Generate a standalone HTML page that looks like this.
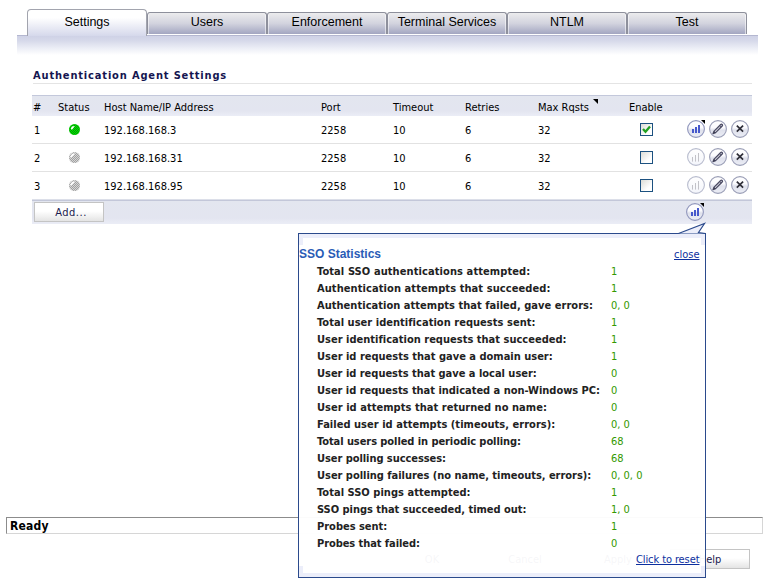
<!DOCTYPE html>
<html><head><meta charset="utf-8"><title>SSO Authentication Configuration</title>
<style>
html,body{margin:0;padding:0;background:#fff;}
body{width:763px;height:582px;position:relative;overflow:hidden;font-family:"DejaVu Sans Condensed","DejaVu Sans","Liberation Sans",sans-serif;font-size:11px;color:#000;}
.tab{position:absolute;top:12px;height:21px;width:118px;border:1px solid #8e909c;border-bottom:none;border-radius:3px 3px 0 0;box-shadow:inset 1px 0 0 rgba(255,255,255,.55),inset -1px 0 0 rgba(255,255,255,.55);background:linear-gradient(#ececee,#d2d3de 50%,#a3a6c1);font-family:"Liberation Sans",sans-serif;font-size:12.5px;text-align:center;line-height:18px;}
.tab.active{top:9px;height:26px;width:118px;border-radius:4px 4px 0 0;box-shadow:none;background:linear-gradient(#fff 30%,#d5d8eb);border-color:#a2a4ae;line-height:24px;z-index:2}
.bar{position:absolute;left:17px;top:35px;width:741px;height:20px;background:linear-gradient(#cfd2e6,#d6d9ea 25%,#eceef6 65%,#fff);border-top:1px solid #b4b7d0;box-sizing:border-box}
h1{position:absolute;left:33px;top:69px;margin:0;font-weight:bold;font-size:11px;line-height:13px;letter-spacing:0.84px;color:#151550;white-space:nowrap}
.hline{position:absolute;left:33px;top:83px;width:719px;height:1px;background:#e4e4e4}
.thead{position:absolute;left:32px;top:95px;width:720px;height:21px;background:linear-gradient(#e3e6ef,#e3e5f0 75%,#ebedf6);border-top:1px solid #c3c8db;box-sizing:border-box}
.tfoot{position:absolute;left:32px;top:199px;width:720px;height:25px;background:linear-gradient(#e3e6ef,#e3e5f0 75%,#ebedf6);border-top:1px solid #dcdfe9;box-shadow:inset 0 1px 0 #c3c7d9;box-sizing:border-box}
.sep{position:absolute;left:32px;width:720px;height:1px;background:#e2e2e2}
.c{position:absolute;white-space:nowrap;line-height:13px}
.dot{position:absolute;left:69px;width:11px;height:11px}
.cb{position:absolute;left:640px;width:11px;height:11px;border:1px solid #1c5180;background:linear-gradient(135deg,#dcdcd6,#fff 70%)}
.btn{position:absolute;box-sizing:border-box;height:20px;border:1px solid #c4c4c4;background:linear-gradient(#fff 45%,#e4e4e4);color:#1a1a4e;text-align:center;line-height:19px}
.btn.hid{border-color:transparent;background:none}
.ico{position:absolute;width:18px;height:18px}
.status{position:absolute;left:6px;top:517px;width:757px;height:17px;box-sizing:border-box;border:1px solid #d6d6d6;border-top-color:#8c8c8c;border-left-color:#8c8c8c;font-weight:bold;font-size:12px;line-height:16px;padding-left:3px;letter-spacing:0.2px}
.pop{position:absolute;left:298px;top:233px;width:408px;height:345px;box-sizing:border-box;border:1px solid #2b4a8c;background:rgba(255,255,255,0.96)}
.pop .l{position:absolute;left:18px;font-weight:bold;white-space:nowrap;line-height:17px;color:#222}
.pop .v{position:absolute;left:312px;white-space:nowrap;line-height:17px;color:#339900}

.bt{position:absolute;left:0;width:406px;height:4px;background:#eceefa}
.bv{position:absolute;width:4px;height:11px;background:#eceefa}
a{color:#0c2f9e;text-decoration:underline}
</style></head><body>
<div class="bar"></div>
<div class="tab active" style="left:27px">Settings</div>
<div class="tab" style="left:147px">Users</div>
<div class="tab" style="left:267px">Enforcement</div>
<div class="tab" style="left:387px">Terminal Services</div>
<div class="tab" style="left:507px">NTLM</div>
<div class="tab" style="left:627px">Test</div>
<h1>Authentication Agent Settings</h1>
<div class="hline"></div>
<div class="thead"></div>
<div class="c" style="left:33px;top:101px">#</div>
<div class="c" style="left:58px;top:101px">Status</div>
<div class="c" style="left:104px;top:101px">Host Name/IP Address</div>
<div class="c" style="left:321px;top:101px">Port</div>
<div class="c" style="left:393px;top:101px">Timeout</div>
<div class="c" style="left:465px;top:101px">Retries</div>
<div class="c" style="left:538px;top:101px">Max Rqsts</div>
<div class="c" style="left:629px;top:101px">Enable</div>
<svg style="position:absolute;left:593px;top:99px" width="5" height="5"><path d="M0 0H5V5Z" fill="#000"/></svg>
<div class="sep" style="top:143px"></div>
<div class="sep" style="top:171px"></div>
<div class="tfoot"></div>
<div class="c" style="left:34px;top:124px">1</div>
<svg class="dot" style="top:124px" viewBox="0 0 11 11"><defs><pattern id="pg124" width="2" height="2" patternUnits="userSpaceOnUse"><rect width="2" height="2" fill="#00e400"/><rect width="1" height="1" fill="#009a00"/><rect x="1" y="1" width="1" height="1" fill="#009a00"/></pattern></defs><circle cx="5.5" cy="5.5" r="5.5" fill="url(#pg124)"/><path d="M2 4.3L2.9 2.4L5.9 2L2.8 5.9Z" fill="#fff"/></svg>
<div class="c" style="left:104px;top:124px">192.168.168.3</div>
<div class="c" style="left:321px;top:124px">2258</div>
<div class="c" style="left:393px;top:124px">10</div>
<div class="c" style="left:465px;top:124px">6</div>
<div class="c" style="left:538px;top:124px">32</div>
<div class="cb" style="top:123px"><svg width="11" height="11" style="position:absolute;left:0;top:0"><path d="M2 5L4.5 7.8L9 2.5" fill="none" stroke="#22a022" stroke-width="2.3"/></svg></div>
<svg class="ico" style="left:687px;top:120px" viewBox="0 0 18 18"><defs><linearGradient id="g687_120" x1="0" y1="0" x2="0" y2="1"><stop offset="0" stop-color="#fff"/><stop offset=".42" stop-color="#fbfbfe"/><stop offset=".56" stop-color="#dfe1ec"/><stop offset="1" stop-color="#eceef6"/></linearGradient></defs><circle cx="9" cy="9" r="8.4" fill="url(#g687_120)" stroke="#9096bc" stroke-width="1.1"/><rect x="5" y="9" width="2" height="4" fill="#4658cc"/><rect x="8" y="7" width="2" height="6" fill="#4658cc"/><rect x="11" y="5" width="2" height="8" fill="#4658cc"/><path d="M14 0H18V4Z" fill="#000"/></svg>
<svg class="ico" style="left:709px;top:120px" viewBox="0 0 18 18"><defs><linearGradient id="g709_120" x1="0" y1="0" x2="0" y2="1"><stop offset="0" stop-color="#fff"/><stop offset=".42" stop-color="#fbfbfe"/><stop offset=".56" stop-color="#dfe1ec"/><stop offset="1" stop-color="#eceef6"/></linearGradient></defs><circle cx="9" cy="9" r="8.4" fill="url(#g709_120)" stroke="#9a9eb6" stroke-width="1.1"/><path d="M4 13.7L5.1 11.1L11.7 4.5A1.05 1.05 0 0 1 13.2 6L6.6 12.6Z" fill="#dcdce6" stroke="#4a4a62" stroke-width="1.25" stroke-linejoin="round"/><path d="M4 13.7L5.1 11.1L6.6 12.6Z" fill="#3c3c52"/><path d="M10.6 5.6L12.1 7.1" stroke="#4e4e66" stroke-width=".8"/></svg>
<svg class="ico" style="left:731px;top:120px" viewBox="0 0 18 18"><defs><linearGradient id="g731_120" x1="0" y1="0" x2="0" y2="1"><stop offset="0" stop-color="#fff"/><stop offset=".42" stop-color="#fbfbfe"/><stop offset=".56" stop-color="#dfe1ec"/><stop offset="1" stop-color="#eceef6"/></linearGradient></defs><circle cx="9" cy="9" r="8.4" fill="url(#g731_120)" stroke="#9a9eb6" stroke-width="1.1"/><path d="M5.8 5.7L12.1 11.7M12.1 5.7L5.8 11.7" stroke="#2e2e38" stroke-width="1.7"/></svg>
<div class="c" style="left:34px;top:152px">2</div>
<svg class="dot" style="top:152px" viewBox="0 0 11 11"><defs><pattern id="px152" width="2" height="2" patternUnits="userSpaceOnUse"><rect width="2" height="2" fill="#d6d6d6"/><rect width="1" height="1" fill="#a0a0a0"/><rect x="1" y="1" width="1" height="1" fill="#a0a0a0"/></pattern></defs><circle cx="5.5" cy="5.5" r="5.5" fill="url(#px152)"/><path d="M1.4 4.2L3.2 1.8L6.2 1.6L1.8 6Z" fill="#fff"/></svg>
<div class="c" style="left:104px;top:152px">192.168.168.31</div>
<div class="c" style="left:321px;top:152px">2258</div>
<div class="c" style="left:393px;top:152px">10</div>
<div class="c" style="left:465px;top:152px">6</div>
<div class="c" style="left:538px;top:152px">32</div>
<div class="cb" style="top:151px"></div>
<svg class="ico" style="left:687px;top:148px" viewBox="0 0 18 18"><defs><linearGradient id="g687_148" x1="0" y1="0" x2="0" y2="1"><stop offset="0" stop-color="#fff"/><stop offset="1" stop-color="#f3f5fb"/></linearGradient></defs><circle cx="9" cy="9" r="8.4" fill="url(#g687_148)" stroke="#b8bcce" stroke-width="1.1"/><rect x="5" y="9" width="1" height="4.6" fill="#c2c2c8"/><rect x="8" y="7" width="1" height="6.6" fill="#c2c2c8"/><rect x="11" y="5" width="1" height="8.6" fill="#c2c2c8"/></svg>
<svg class="ico" style="left:709px;top:148px" viewBox="0 0 18 18"><defs><linearGradient id="g709_148" x1="0" y1="0" x2="0" y2="1"><stop offset="0" stop-color="#fff"/><stop offset=".42" stop-color="#fbfbfe"/><stop offset=".56" stop-color="#dfe1ec"/><stop offset="1" stop-color="#eceef6"/></linearGradient></defs><circle cx="9" cy="9" r="8.4" fill="url(#g709_148)" stroke="#9a9eb6" stroke-width="1.1"/><path d="M4 13.7L5.1 11.1L11.7 4.5A1.05 1.05 0 0 1 13.2 6L6.6 12.6Z" fill="#dcdce6" stroke="#4a4a62" stroke-width="1.25" stroke-linejoin="round"/><path d="M4 13.7L5.1 11.1L6.6 12.6Z" fill="#3c3c52"/><path d="M10.6 5.6L12.1 7.1" stroke="#4e4e66" stroke-width=".8"/></svg>
<svg class="ico" style="left:731px;top:148px" viewBox="0 0 18 18"><defs><linearGradient id="g731_148" x1="0" y1="0" x2="0" y2="1"><stop offset="0" stop-color="#fff"/><stop offset=".42" stop-color="#fbfbfe"/><stop offset=".56" stop-color="#dfe1ec"/><stop offset="1" stop-color="#eceef6"/></linearGradient></defs><circle cx="9" cy="9" r="8.4" fill="url(#g731_148)" stroke="#9a9eb6" stroke-width="1.1"/><path d="M5.8 5.7L12.1 11.7M12.1 5.7L5.8 11.7" stroke="#2e2e38" stroke-width="1.7"/></svg>
<div class="c" style="left:34px;top:180px">3</div>
<svg class="dot" style="top:180px" viewBox="0 0 11 11"><defs><pattern id="px180" width="2" height="2" patternUnits="userSpaceOnUse"><rect width="2" height="2" fill="#d6d6d6"/><rect width="1" height="1" fill="#a0a0a0"/><rect x="1" y="1" width="1" height="1" fill="#a0a0a0"/></pattern></defs><circle cx="5.5" cy="5.5" r="5.5" fill="url(#px180)"/><path d="M1.4 4.2L3.2 1.8L6.2 1.6L1.8 6Z" fill="#fff"/></svg>
<div class="c" style="left:104px;top:180px">192.168.168.95</div>
<div class="c" style="left:321px;top:180px">2258</div>
<div class="c" style="left:393px;top:180px">10</div>
<div class="c" style="left:465px;top:180px">6</div>
<div class="c" style="left:538px;top:180px">32</div>
<div class="cb" style="top:179px"></div>
<svg class="ico" style="left:687px;top:176px" viewBox="0 0 18 18"><defs><linearGradient id="g687_176" x1="0" y1="0" x2="0" y2="1"><stop offset="0" stop-color="#fff"/><stop offset="1" stop-color="#f3f5fb"/></linearGradient></defs><circle cx="9" cy="9" r="8.4" fill="url(#g687_176)" stroke="#b8bcce" stroke-width="1.1"/><rect x="5" y="9" width="1" height="4.6" fill="#c2c2c8"/><rect x="8" y="7" width="1" height="6.6" fill="#c2c2c8"/><rect x="11" y="5" width="1" height="8.6" fill="#c2c2c8"/></svg>
<svg class="ico" style="left:709px;top:176px" viewBox="0 0 18 18"><defs><linearGradient id="g709_176" x1="0" y1="0" x2="0" y2="1"><stop offset="0" stop-color="#fff"/><stop offset=".42" stop-color="#fbfbfe"/><stop offset=".56" stop-color="#dfe1ec"/><stop offset="1" stop-color="#eceef6"/></linearGradient></defs><circle cx="9" cy="9" r="8.4" fill="url(#g709_176)" stroke="#9a9eb6" stroke-width="1.1"/><path d="M4 13.7L5.1 11.1L11.7 4.5A1.05 1.05 0 0 1 13.2 6L6.6 12.6Z" fill="#dcdce6" stroke="#4a4a62" stroke-width="1.25" stroke-linejoin="round"/><path d="M4 13.7L5.1 11.1L6.6 12.6Z" fill="#3c3c52"/><path d="M10.6 5.6L12.1 7.1" stroke="#4e4e66" stroke-width=".8"/></svg>
<svg class="ico" style="left:731px;top:176px" viewBox="0 0 18 18"><defs><linearGradient id="g731_176" x1="0" y1="0" x2="0" y2="1"><stop offset="0" stop-color="#fff"/><stop offset=".42" stop-color="#fbfbfe"/><stop offset=".56" stop-color="#dfe1ec"/><stop offset="1" stop-color="#eceef6"/></linearGradient></defs><circle cx="9" cy="9" r="8.4" fill="url(#g731_176)" stroke="#9a9eb6" stroke-width="1.1"/><path d="M5.8 5.7L12.1 11.7M12.1 5.7L5.8 11.7" stroke="#2e2e38" stroke-width="1.7"/></svg>
<div class="btn" style="left:34px;top:202px;width:70px;letter-spacing:0.5px;text-indent:4px">Add...</div>
<svg class="ico" style="left:686px;top:203px" viewBox="0 0 18 18"><defs><linearGradient id="g686_203" x1="0" y1="0" x2="0" y2="1"><stop offset="0" stop-color="#fff"/><stop offset=".42" stop-color="#fbfbfe"/><stop offset=".56" stop-color="#dfe1ec"/><stop offset="1" stop-color="#eceef6"/></linearGradient></defs><circle cx="9" cy="9" r="8.4" fill="url(#g686_203)" stroke="#9096bc" stroke-width="1.1"/><rect x="5" y="9" width="2" height="4" fill="#4658cc"/><rect x="8" y="7" width="2" height="6" fill="#4658cc"/><rect x="11" y="5" width="2" height="8" fill="#4658cc"/><path d="M14 0H18V4Z" fill="#000"/></svg>
<div class="status">Ready</div>
<div class="btn hid" style="left:392px;top:549px;width:80px">OK</div>
<div class="btn hid" style="left:485px;top:549px;width:80px">Cancel</div>
<div class="btn hid" style="left:578px;top:549px;width:80px">Apply</div>
<div class="btn" style="left:670px;top:549px;width:80px">Help</div>
<svg style="position:absolute;left:676px;top:221px;z-index:5" width="32" height="14"><path d="M2.5 12.5L28.5 2.5L22.5 11.5L29.5 12.5" fill="#eceefa" stroke="#2b4a8c" stroke-width="1.2"/></svg>
<div class="pop">
<div class="bt" style="top:0"></div><div class="bt" style="bottom:0"></div><div class="bv" style="left:0;top:0"></div><div class="bv" style="right:0;top:0"></div><div class="bv" style="left:0;bottom:0"></div><div class="bv" style="right:0;bottom:0"></div>
<div style="position:absolute;left:0px;top:13px;font-family:'Liberation Sans',sans-serif;font-size:12px;font-weight:bold;color:#2a5cb6;line-height:14px">SSO Statistics</div>
<a style="position:absolute;left:375px;top:14px;line-height:13px">close</a>
<div class="l" style="top:29px;letter-spacing:0.094px">Total SSO authentications attempted:</div><div class="v" style="top:29px">1</div>
<div class="l" style="top:46px;letter-spacing:0.084px">Authentication attempts that succeeded:</div><div class="v" style="top:46px">1</div>
<div class="l" style="top:63px;letter-spacing:0.033px">Authentication attempts that failed, gave errors:</div><div class="v" style="top:63px">0, 0</div>
<div class="l" style="top:80px;letter-spacing:0.036px">Total user identification requests sent:</div><div class="v" style="top:80px">1</div>
<div class="l" style="top:97px;letter-spacing:0.014px">User identification requests that succeeded:</div><div class="v" style="top:97px">1</div>
<div class="l" style="top:114px;letter-spacing:0.001px">User id requests that gave a domain user:</div><div class="v" style="top:114px">1</div>
<div class="l" style="top:131px;letter-spacing:-0.017px">User id requests that gave a local user:</div><div class="v" style="top:131px">0</div>
<div class="l" style="top:148px;letter-spacing:-0.024px">User id requests that indicated a non-Windows PC:</div><div class="v" style="top:148px">0</div>
<div class="l" style="top:165px;letter-spacing:0.04px">User id attempts that returned no name:</div><div class="v" style="top:165px">0</div>
<div class="l" style="top:182px;letter-spacing:0.033px">Failed user id attempts (timeouts, errors):</div><div class="v" style="top:182px">0, 0</div>
<div class="l" style="top:199px;letter-spacing:-0.073px">Total users polled in periodic polling:</div><div class="v" style="top:199px">68</div>
<div class="l" style="top:216px;letter-spacing:-0.06px">User polling successes:</div><div class="v" style="top:216px">68</div>
<div class="l" style="top:233px;letter-spacing:-0.024px">User polling failures (no name, timeouts, errors):</div><div class="v" style="top:233px">0, 0, 0</div>
<div class="l" style="top:250px;letter-spacing:0.035px">Total SSO pings attempted:</div><div class="v" style="top:250px">1</div>
<div class="l" style="top:267px;letter-spacing:-0.034px">SSO pings that succeeded, timed out:</div><div class="v" style="top:267px">1, 0</div>
<div class="l" style="top:284px;letter-spacing:-0.011px">Probes sent:</div><div class="v" style="top:284px">1</div>
<div class="l" style="top:301px;letter-spacing:-0.073px">Probes that failed:</div><div class="v" style="top:301px">0</div>
<a style="position:absolute;left:337px;top:319px;line-height:13px;white-space:nowrap;letter-spacing:-0.1px">Click to reset</a>
</div>
</body></html>
